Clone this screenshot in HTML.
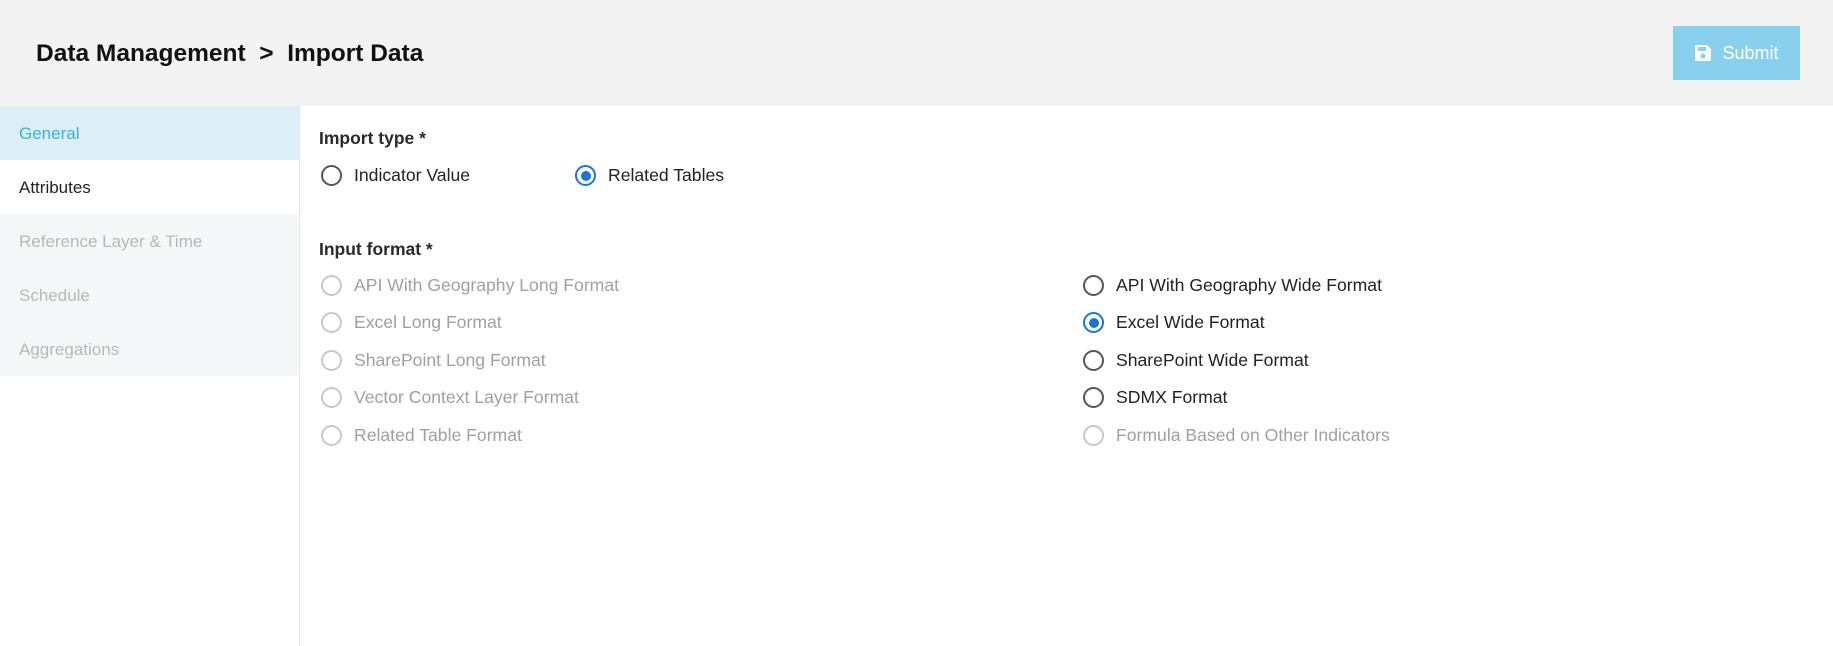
<!DOCTYPE html>
<html><head><meta charset="utf-8"><style>
*{box-sizing:border-box;margin:0;padding:0}
body{width:1833px;height:646px;background:#fff;font-family:"Liberation Sans",sans-serif;position:relative;overflow:hidden}
.hdr{position:absolute;left:0;top:0;width:1833px;height:106px;background:#f3f3f3}
.title{position:absolute;left:36px;top:40px;font-size:24.5px;font-weight:bold;color:#111}
.btn{position:absolute;left:1673px;top:26px;width:127px;height:54px;background:#89d0ee;color:#fff;font-size:18px;display:flex;align-items:center;justify-content:center;gap:10px}
.side{position:absolute;left:0;top:106px;width:300px;height:540px;border-right:1px solid #e6e6e6}
.it{height:54px;line-height:56px;padding-left:19px;font-size:17px}
.lab{position:absolute;font-size:17.5px;color:#2a2a2a;font-weight:bold}
.r{position:absolute;display:flex;align-items:center;font-size:17.6px;color:#222}
.c{width:21px;height:21px;border:2px solid #555;border-radius:50%;margin-right:12px;position:relative}
.d{color:#a0a0a0}.d .c{border-color:#c8c8c8}
.s .c{border-color:#1976d2}.s .c::after{content:"";position:absolute;left:3.5px;top:3.5px;width:10px;height:10px;border-radius:50%;background:#1976d2}
</style></head><body>
<div class="hdr"><div class="title">Data Management&nbsp; &gt;&nbsp; Import Data</div>
<div class="btn"><svg width="18" height="18" viewBox="0 0 18 18"><path d="M2 1h11l4 4v11a1 1 0 0 1-1 1H2a1 1 0 0 1-1-1V2a1 1 0 0 1 1-1z" fill="#fff"/><rect x="4" y="3" width="8" height="4" fill="#89d0ee"/><circle cx="9" cy="12" r="2.5" fill="#89d0ee"/></svg>Submit</div></div>
<div class="side">
<div class="it" style="background:#dceef8;color:#3ab0e0">General</div>
<div class="it" style="color:#222">Attributes</div>
<div class="it" style="background:#f6f7f9;color:#b8b8b8">Reference Layer &amp; Time</div>
<div class="it" style="background:#f6f7f9;color:#b8b8b8">Schedule</div>
<div class="it" style="background:#f6f7f9;color:#b8b8b8">Aggregations</div>
</div>
<div class="lab" style="left:319px;top:128px">Import type *</div>
<div class="r" style="left:321px;top:165px"><div class="c"></div>Indicator Value</div>
<div class="r s" style="left:575px;top:165px"><div class="c"></div>Related Tables</div>
<div class="lab" style="left:319px;top:239px">Input format *</div>
<div class="r d" style="left:321px;top:275px"><div class="c"></div>API With Geography Long Format</div>
<div class="r d" style="left:321px;top:312px"><div class="c"></div>Excel Long Format</div>
<div class="r d" style="left:321px;top:350px"><div class="c"></div>SharePoint Long Format</div>
<div class="r d" style="left:321px;top:387px"><div class="c"></div>Vector Context Layer Format</div>
<div class="r d" style="left:321px;top:425px"><div class="c"></div>Related Table Format</div>
<div class="r" style="left:1083px;top:275px"><div class="c"></div>API With Geography Wide Format</div>
<div class="r s" style="left:1083px;top:312px"><div class="c"></div>Excel Wide Format</div>
<div class="r" style="left:1083px;top:350px"><div class="c"></div>SharePoint Wide Format</div>
<div class="r" style="left:1083px;top:387px"><div class="c"></div>SDMX Format</div>
<div class="r d" style="left:1083px;top:425px"><div class="c"></div>Formula Based on Other Indicators</div>
</body></html>
